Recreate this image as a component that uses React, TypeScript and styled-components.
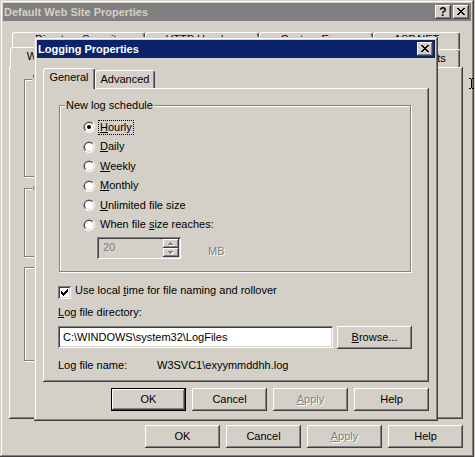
import React from 'react';
import styled, { createGlobalStyle, css } from 'styled-components';

const FACE = '#d4d0c8';
const SHADOW = '#808080';
const DARK = '#404040';
const LIGHT = '#ffffff';
const NAVY = '#0a246a';

const GlobalStyle = createGlobalStyle`
  html, body {
    margin: 0;
    padding: 0;
    background: ${FACE};
  }
  body {
    font-family: "Liberation Sans", Arial, sans-serif;
    font-size: 11px;
    line-height: 13px;
    color: #000;
  }
`;

// classic 3d edges, drawn with inset shadows so they take no layout space
const windowEdge = css`
  box-shadow: inset -1px -1px 0 ${DARK}, inset 1px 1px 0 ${FACE},
    inset -2px -2px 0 ${SHADOW}, inset 2px 2px 0 ${LIGHT};
`;

const raisedEdge = css`
  box-shadow: inset -1px -1px 0 ${DARK}, inset 1px 1px 0 ${LIGHT},
    inset -2px -2px 0 ${SHADOW}, inset 2px 2px 0 ${FACE};
`;

const sunkenEdge = css`
  box-shadow: inset 1px 1px 0 ${SHADOW}, inset -1px -1px 0 ${LIGHT},
    inset 2px 2px 0 ${DARK}, inset -2px -2px 0 ${FACE};
`;

const Desktop = styled.div`
  position: relative;
  width: 475px;
  height: 457px;
  overflow: hidden;
  background: ${FACE};
`;

const Window = styled.section<{ $x: number; $y: number; $w: number; $h: number }>`
  position: absolute;
  isolation: isolate;
  left: ${(p) => p.$x}px;
  top: ${(p) => p.$y}px;
  width: ${(p) => p.$w}px;
  height: ${(p) => p.$h}px;
  box-sizing: border-box;
  padding: 3px;
  display: flex;
  flex-direction: column;
  background: ${FACE};
  ${windowEdge}
`;

const TitleBar = styled.header<{ $active?: boolean }>`
  flex: none;
  height: 18px;
  display: flex;
  align-items: center;
  padding: 0 2px 0 1px;
  background: ${(p) => (p.$active ? NAVY : SHADOW)};
  color: ${(p) => (p.$active ? LIGHT : FACE)};
  font-weight: bold;
`;

const TitleText = styled.span`
  flex: 1;
  white-space: nowrap;
  overflow: hidden;
`;

const CaptionButton = styled.button<{ $gap?: number }>`
  flex: none;
  width: 16px;
  height: 14px;
  margin-left: ${(p) => p.$gap ?? 0}px;
  padding: 0 0 1px;
  border: 0;
  display: flex;
  align-items: center;
  justify-content: center;
  background: ${FACE};
  color: #000;
  font: bold 12px/12px "Liberation Sans", Arial, sans-serif;
  ${raisedEdge}

  svg {
    display: block;
  }
`;

const BackBody = styled.div`
  flex: 1;
  display: flex;
  flex-direction: column;
  padding: 11px 8px 0 6px;
`;

const DialogBody = styled.div`
  flex: 1;
  display: flex;
  flex-direction: column;
  padding: 12px 6px 0;
`;

const TabRow = styled.div<{ $indent: number }>`
  flex: none;
  display: flex;
  align-items: flex-end;
  padding-left: ${(p) => p.$indent}px;
`;

const Tab = styled.div<{ $w: number; $h: number; $selected?: boolean; $textTop?: number }>`
  position: relative;
  z-index: ${(p) => (p.$selected ? 1 : 0)};
  flex: none;
  box-sizing: border-box;
  width: ${(p) => p.$w}px;
  height: ${(p) => (p.$selected ? p.$h + 3 : p.$h)}px;
  margin: ${(p) => (p.$selected ? '-2px 0 -1px' : '0')};
  padding-top: ${(p) => p.$textTop ?? 2}px;
  border: 1px solid ${LIGHT};
  border-bottom: 0;
  border-right-color: ${DARK};
  border-radius: 3px 3px 0 0;
  box-shadow: inset -1px 0 0 ${SHADOW};
  background: ${FACE};
  text-align: center;
  white-space: nowrap;
  overflow: hidden;
`;

const BackPanel = styled.div`
  flex: none;
  height: 352px;
  box-sizing: border-box;
  padding-left: 15px;
  display: flex;
  flex-direction: column;
  align-items: flex-start;
  background: ${FACE};
  ${raisedEdge}
`;

const TabPanel = styled.div`
  flex: none;
  height: 294px;
  box-sizing: border-box;
  padding: 0 17px 0 15px;
  display: flex;
  flex-direction: column;
  background: ${FACE};
  ${raisedEdge}
`;

const GroupBox = styled.div<{ $mt: number; $w?: number; $h?: number }>`
  box-sizing: border-box;
  margin-top: ${(p) => p.$mt}px;
  width: ${(p) => (p.$w ? `${p.$w}px` : 'auto')};
  height: ${(p) => (p.$h ? `${p.$h}px` : 'auto')};
  border: 1px solid ${SHADOW};
  box-shadow: 1px 1px 0 ${LIGHT}, inset 1px 1px 0 ${LIGHT};
  display: flex;
  flex-direction: column;
`;

const ScheduleGroup = styled(GroupBox)`
  margin-left: 1px;
  margin-right: 1px;
  padding-bottom: 12px;
`;

const GroupLabel = styled.span<{ $indent: number }>`
  align-self: flex-start;
  margin: -7px 0 0 ${(p) => p.$indent}px;
  padding: 0 1px;
  line-height: 13px;
  white-space: nowrap;
  background: ${FACE};
`;

const OptionList = styled.div`
  display: flex;
  flex-direction: column;
  padding: 5.5px 0 0 23px;
`;

const OptionRow = styled.label`
  height: 19.5px;
  display: flex;
  align-items: center;
  gap: 4px;

  svg {
    flex: none;
    display: block;
  }
`;

const OptionText = styled.span<{ $focused?: boolean }>`
  padding: 0 1px;
  line-height: 13px;
  white-space: nowrap;
  outline: ${(p) => (p.$focused ? '1px dotted #000' : 'none')};
`;

const SpinRow = styled.div`
  display: flex;
  align-items: flex-end;
  margin: 2.5px 0 0 14px;
`;

const SpinField = styled.div`
  flex: none;
  width: 84px;
  height: 22px;
  box-sizing: border-box;
  padding: 2px;
  display: flex;
  background: ${FACE};
  ${sunkenEdge}
`;

const SpinValue = styled.span`
  flex: 1;
  padding: 2px 0 0 4px;
  color: ${SHADOW};
`;

const SpinButtons = styled.div`
  flex: none;
  width: 16px;
  display: flex;
  flex-direction: column;
`;

const SpinButton = styled.div`
  height: 9px;
  display: flex;
  align-items: center;
  justify-content: center;
  background: ${FACE};
  ${raisedEdge}

  svg {
    display: block;
  }
`;

const DisabledText = styled.span`
  color: ${SHADOW};
  text-shadow: 1px 1px 0 ${LIGHT};
`;

const UnitLabel = styled(DisabledText)`
  margin: 0 0 1.5px 27px;
`;

const CheckRow = styled.label`
  display: flex;
  align-items: flex-start;
  gap: 4px;
  margin-top: 12px;
`;

const CheckBox = styled.span`
  flex: none;
  width: 13px;
  height: 13px;
  margin-top: 2px;
  box-sizing: border-box;
  padding: 3px;
  background: ${LIGHT};
  ${sunkenEdge}

  svg {
    display: block;
  }
`;

const FieldLabel = styled.div<{ $mt: number }>`
  margin-top: ${(p) => p.$mt}px;
  white-space: nowrap;
`;

const InputRow = styled.div`
  display: flex;
  align-items: flex-start;
  gap: 4px;
  margin-top: 7px;
`;

const TextField = styled.input`
  flex: 1;
  min-width: 0;
  height: 22px;
  box-sizing: border-box;
  margin: 0;
  padding: 0 0 0 5px;
  border: 0;
  outline: none;
  background: ${LIGHT};
  color: #000;
  font: 11px "Liberation Sans", Arial, sans-serif;
  ${sunkenEdge}
`;

const InfoRow = styled.div`
  display: flex;
  margin-top: 10px;
  white-space: nowrap;
`;

const InfoKey = styled.span`
  flex: none;
  width: 99px;
`;

const ButtonRow = styled.div<{ $mt: number }>`
  flex: none;
  display: flex;
  justify-content: flex-end;
  gap: 6px;
  margin-top: ${(p) => p.$mt}px;
`;

const PushButton = styled.button<{ $default?: boolean }>`
  flex: none;
  width: 75px;
  height: 23px;
  box-sizing: border-box;
  margin: 0;
  padding: 0;
  border: ${(p) => (p.$default ? '1px solid #000' : '0')};
  background: ${FACE};
  color: ${(p) => (p.disabled ? SHADOW : '#000')};
  text-shadow: ${(p) => (p.disabled ? `1px 1px 0 ${LIGHT}` : 'none')};
  font: 11px/13px "Liberation Sans", Arial, sans-serif;
  ${raisedEdge}
`;

const Cursor = styled.svg`
  position: absolute;
  left: 469px;
  top: 78px;
  display: block;
`;

function CloseGlyph() {
  return (
    <svg width="8" height="7" viewBox="0 0 8 7" shapeRendering="crispEdges">
      <path
        d="M0 0h2v1H0zM6 0h2v1H6zM1 1h2v1H1zM5 1h2v1H5zM2 2h4v1H2zM3 3h2v1H3zM2 4h4v1H2zM1 5h2v1H1zM5 5h2v1H5zM0 6h2v1H0zM6 6h2v1H6z"
        fill="#000"
      />
    </svg>
  );
}

function RadioDot({ checked }: { checked?: boolean }) {
  return (
    <svg width="12" height="12" viewBox="0 0 12 12">
      <circle cx="6" cy="6" r="6" fill={LIGHT} />
      <path d="M1.76 10.24A6 6 0 0 1 10.24 1.76L6 6Z" fill={SHADOW} />
      <circle cx="6" cy="6" r="5" fill={FACE} />
      <path d="M2.46 9.54A5 5 0 0 1 9.54 2.46L6 6Z" fill={DARK} />
      <circle cx="6" cy="6" r="4" fill={LIGHT} />
      {checked && <circle cx="6" cy="6" r="2" fill="#000" />}
    </svg>
  );
}

const ARROW_UP = 'M2 0h1v1h1v1h1v1H0V2h1V1h1z';
const ARROW_DOWN = 'M0 0h5v1H4v1H3v1H2V2H1V1H0z';

function SpinArrow({ down }: { down?: boolean }) {
  const d = down ? ARROW_DOWN : ARROW_UP;
  return (
    <svg width="6" height="4" viewBox="0 0 6 4" shapeRendering="crispEdges">
      <path d={d} transform="translate(1 1)" fill={LIGHT} />
      <path d={d} fill={SHADOW} />
    </svg>
  );
}

function CheckMark() {
  return (
    <svg width="7" height="7" viewBox="0 0 7 7" shapeRendering="crispEdges">
      <path
        d="M6 0h1v1H6zM5 1h2v1H5zM0 2h1v1H0zM4 2h3v1H4zM0 3h2v1H0zM3 3h3v1H3zM0 4h5v1H0zM1 5h3v1H1zM2 6h1v1H2z"
        fill="#000"
      />
    </svg>
  );
}

const backTabsTop = [
  { label: 'Directory Security', w: 133 },
  { label: 'HTTP Headers', w: 114 },
  { label: 'Custom Errors', w: 114 },
  { label: 'ASP.NET', w: 87 },
];

const backTabsFront = [
  { label: 'Web Site', w: 78, selected: true },
  { label: 'Performance', w: 92 },
  { label: 'ISAPI Filters', w: 92 },
  { label: 'Home Directory', w: 104 },
  { label: 'Documents', w: 84 },
];

const schedules: { key: string; before: string; rest: string }[] = [
  { key: 'H', before: '', rest: 'ourly' },
  { key: 'D', before: '', rest: 'aily' },
  { key: 'W', before: '', rest: 'eekly' },
  { key: 'M', before: '', rest: 'onthly' },
  { key: 'U', before: '', rest: 'nlimited file size' },
  { key: 's', before: 'When file ', rest: 'ize reaches:' },
];

export default function App() {
  return (
    <>
      <GlobalStyle />
      <Desktop>
        <Window $x={0} $y={0} $w={474} $h={457}>
          <TitleBar>
            <TitleText>Default Web Site Properties</TitleText>
            <CaptionButton>?</CaptionButton>
            <CaptionButton $gap={2}>
              <CloseGlyph />
            </CaptionButton>
          </TitleBar>
          <BackBody>
            <TabRow $indent={3}>
              {backTabsTop.map((t) => (
                <Tab key={t.label} $w={t.w} $h={17} $textTop={0}>
                  {t.label}
                </Tab>
              ))}
            </TabRow>
            <TabRow $indent={1}>
              {backTabsFront.map((t) => (
                <Tab key={t.label} $w={t.w} $h={18} $selected={t.selected}>
                  {t.label}
                </Tab>
              ))}
            </TabRow>
            <BackPanel>
              <GroupBox $mt={12} $w={407} $h={98}>
                <GroupLabel $indent={7}>Web site identification</GroupLabel>
              </GroupBox>
              <GroupBox $mt={11} $w={407} $h={69}>
                <GroupLabel $indent={7}>Connections</GroupLabel>
              </GroupBox>
              <GroupBox $mt={10} $w={407} $h={94}>
                <GroupLabel $indent={12}>Enable logging</GroupLabel>
              </GroupBox>
            </BackPanel>
            <ButtonRow $mt={6}>
              <PushButton>OK</PushButton>
              <PushButton>Cancel</PushButton>
              <PushButton disabled>
                <u>A</u>pply
              </PushButton>
              <PushButton>Help</PushButton>
            </ButtonRow>
          </BackBody>
        </Window>

        <Window $x={34} $y={37} $w={404} $h={384}>
          <TitleBar $active>
            <TitleText>Logging Properties</TitleText>
            <CaptionButton>
              <CloseGlyph />
            </CaptionButton>
          </TitleBar>
          <DialogBody>
            <TabRow $indent={0}>
              <Tab $w={52} $h={18} $selected>
                General
              </Tab>
              <Tab $w={60} $h={18}>
                Advanced
              </Tab>
            </TabRow>
            <TabPanel>
              <ScheduleGroup $mt={17}>
                <GroupLabel $indent={5}>New log schedule</GroupLabel>
                <OptionList>
                  {schedules.map((s, i) => (
                    <OptionRow key={s.key}>
                      <RadioDot checked={i === 0} />
                      <OptionText $focused={i === 0}>
                        {s.before}
                        <u>{s.key}</u>
                        {s.rest}
                      </OptionText>
                    </OptionRow>
                  ))}
                  <SpinRow>
                    <SpinField>
                      <SpinValue>20</SpinValue>
                      <SpinButtons>
                        <SpinButton>
                          <SpinArrow />
                        </SpinButton>
                        <SpinButton>
                          <SpinArrow down />
                        </SpinButton>
                      </SpinButtons>
                    </SpinField>
                    <UnitLabel>MB</UnitLabel>
                  </SpinRow>
                </OptionList>
              </ScheduleGroup>

              <CheckRow>
                <CheckBox>
                  <CheckMark />
                </CheckBox>
                <span>
                  Use local <u>t</u>ime for file naming and rollover
                </span>
              </CheckRow>

              <FieldLabel $mt={7}>
                <u>L</u>og file directory:
              </FieldLabel>
              <InputRow>
                <TextField readOnly defaultValue="C:\WINDOWS\system32\LogFiles" />
                <PushButton>
                  <u>B</u>rowse...
                </PushButton>
              </InputRow>

              <InfoRow>
                <InfoKey>Log file name:</InfoKey>
                <span>W3SVC1\exyymmddhh.log</span>
              </InfoRow>
            </TabPanel>
            <ButtonRow $mt={6}>
              <PushButton $default>OK</PushButton>
              <PushButton>Cancel</PushButton>
              <PushButton disabled>
                <u>A</u>pply
              </PushButton>
              <PushButton>Help</PushButton>
            </ButtonRow>
          </DialogBody>
        </Window>

        <Cursor width="5" height="11" viewBox="0 0 5 11" shapeRendering="crispEdges">
          <path d="M0 0h2v1H0zM3 0h2v1H3zM2 1h1v9H2zM0 10h2v1H0zM3 10h2v1H3z" fill="#000" />
        </Cursor>
      </Desktop>
    </>
  );
}
